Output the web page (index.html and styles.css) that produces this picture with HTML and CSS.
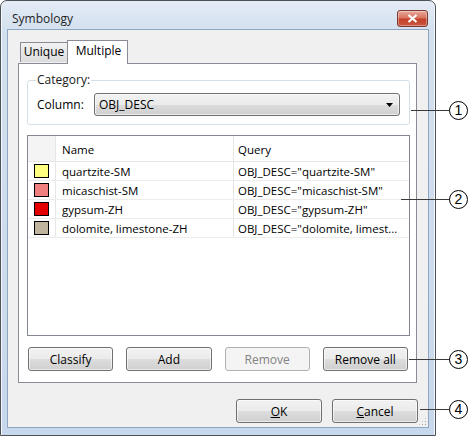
FILE: index.html
```html
<!DOCTYPE html>
<html>
<head>
<meta charset="utf-8">
<link rel="stylesheet" href="styles.css">
</head>
<body>
<div class="screen">
  <div class="window">
    <div class="titlebar">
      <span class="title">Symbology</span>
      <div class="close"><svg width="11" height="9" viewBox="0 0 11 9"><path d="M1.5 1 L9.5 8 M9.5 1 L1.5 8" stroke="#fff" stroke-width="2.2" fill="none"/></svg></div>
    </div>
    <div class="client">
      <div class="tabs">
        <div class="tab">Unique</div>
        <div class="tab active">Multiple</div>
      </div>
      <div class="pane">
        <fieldset class="group">
          <legend>Category:</legend>
          <div class="colrow">
            <span class="lbl">Column:</span>
            <div class="combo"><span>OBJ_DESC</span><svg width="7" height="4" viewBox="0 0 7 4"><path d="M0 0 H7 L3.5 4 Z" fill="#000"/></svg></div>
          </div>
        </fieldset>
        <div class="list">
          <div class="lrow head">
            <div class="c0"></div><div class="c1">Name</div><div class="c2">Query</div>
          </div>
          <div class="lrow">
            <div class="c0"><span class="sw sw-yellow"></span></div><div class="c1">quartzite-SM</div><div class="c2">OBJ_DESC="quartzite-SM"</div>
          </div>
          <div class="lrow">
            <div class="c0"><span class="sw sw-pink"></span></div><div class="c1">micaschist-SM</div><div class="c2">OBJ_DESC="micaschist-SM"</div>
          </div>
          <div class="lrow">
            <div class="c0"><span class="sw sw-red"></span></div><div class="c1">gypsum-ZH</div><div class="c2">OBJ_DESC="gypsum-ZH"</div>
          </div>
          <div class="lrow">
            <div class="c0"><span class="sw sw-tan"></span></div><div class="c1">dolomite, limestone-ZH</div><div class="c2">OBJ_DESC="dolomite, limest...</div>
          </div>
        </div>
        <div class="btnrow">
          <div class="btn">Classify</div>
          <div class="btn">Add</div>
          <div class="btn disabled">Remove</div>
          <div class="btn">Remove all</div>
        </div>
      </div>
      <div class="footer">
        <div class="btn"><u>O</u>K</div>
        <div class="btn"><u>C</u>ancel</div>
      </div>
      <div class="grip"></div>
    </div>
  </div>

  <div class="callout co1"><span class="line"></span><span class="num">1</span></div>
  <div class="callout co2"><span class="line"></span><span class="num">2</span></div>
  <div class="callout co3"><span class="line"></span><span class="num">3</span></div>
  <div class="callout co4"><span class="line"></span><span class="num">4</span></div>
</div>
</body>
</html>
```

FILE: styles.css
```css
* { box-sizing: border-box; }
html, body { margin: 0; padding: 0; background: #fff; }
body {
  font-family: "Open Sans", "Noto Sans", sans-serif;
  font-size: 11.5px;
  color: #000;
}
.screen {
  position: relative;
  width: 469px;
  height: 436px;
}
.window {
  width: 436px;
  height: 436px;
  border: 1px solid #4d5358;
  border-radius: 7px 7px 0 0;
  background: linear-gradient(to bottom, #e4ecf6 0px, #d3e0ef 30px, #c8d8ec 100%);
  padding: 0 6px 7px 6px;
  display: flex;
  flex-direction: column;
  box-shadow: inset 1px 0 0 #f4f8fc, inset -1px 0 0 #f4f8fc;
}
.titlebar {
  height: 28px;
  display: flex;
  align-items: flex-start;
  justify-content: space-between;
  padding-left: 5px;
}
.title {
  margin-top: 9px;
  font-size: 12px;
  color: #1e1e1e;
}
.close {
  margin-top: 9px;
  margin-right: 1px;
  width: 31px;
  height: 17px;
  border: 1px solid #7a3a32;
  border-radius: 3px;
  background: linear-gradient(to bottom, #e9a99c 0%, #d9755f 45%, #c4402a 55%, #c9573f 100%);
  display: flex;
  align-items: center;
  justify-content: center;
  box-shadow: inset 0 0 0 1px rgba(255,255,255,0.35);
}
.client {
  position: relative;
  flex: 1;
  background: #f0f0f0;
  border: 1px solid #8fa6c3;
  display: flex;
  flex-direction: column;
}
.tabs {
  display: flex;
  align-items: flex-end;
  height: 33px;
  padding-left: 12px;
  position: relative;
  z-index: 2;
}
.tab {
  width: 48px;
  height: 20px;
  border: 1px solid #898c95;
  border-bottom: none;
  background: linear-gradient(to bottom, #f2f2f2, #dcdcdc);
  margin-bottom: 1px;
  line-height: 18px;
  text-align: center;
  font-size: 12px;
}
.tab.active {
  width: 61px;
  height: 24px;
  background: #fff;
  margin-bottom: -1px;
  margin-left: -1px;
  padding-left: 2px;
  line-height: 20px;
}
.pane {
  margin: 0 11px 0 10px;
  height: 320px;
  border: 1px solid #898c95;
  background: #fff;
  padding: 0 8px 0 8px;
  display: flex;
  flex-direction: column;
}
.group {
  margin: 8px 0 0 0;
  padding: 0 9px 0 9px;
  border: 1px solid #d5dfe5;
  border-radius: 3px;
  height: 53px;
  flex-shrink: 0;
  box-shadow: inset 0 0 0 1px #fff;
}
.group legend {
  padding: 0 1px;
  margin-left: -1px;
  font-size: 12px;
  line-height: 16px;
  color: #1a1a1a;
}
.colrow {
  display: flex;
  align-items: center;
  margin-top: 5px;
}
.lbl {
  width: 57px;
  font-size: 12px;
}
.combo {
  width: 306px;
  height: 23px;
  border: 1px solid #707070;
  border-radius: 3px;
  background: linear-gradient(to bottom, #f2f2f2 0%, #ebebeb 50%, #dddddd 51%, #cfcfcf 100%);
  box-shadow: inset 0 0 0 1px rgba(255,255,255,0.6);
  display: flex;
  align-items: center;
  justify-content: space-between;
  padding: 0 6px 0 4px;
  font-size: 12px;
}
.list {
  margin-top: 10px;
  margin-right: -2px;
  height: 201px;
  border: 1px solid #828790;
  background: #fff;
  flex-shrink: 0;
}
.lrow {
  display: flex;
  height: 19px;
  border-bottom: 1px solid #ececec;
  align-items: stretch;
}
.lrow.head {
  height: 26px;
  border-bottom: 1px solid #e5e5e5;
}
.lrow > div {
  display: flex;
  align-items: center;
  border-right: 1px solid #e5e5e5;
  white-space: nowrap;
  overflow: hidden;
}
.c0 { width: 28px; justify-content: center; }
.c1 { width: 178px; padding-left: 6px; }
.c2 { flex: 1; padding-left: 4px; border-right: none !important; }
.head .c0 { background: #f4f4f4; }
.head > div { padding-top: 1px; }
.sw {
  width: 15px;
  height: 14px;
  border: 1px solid #000;
  display: block;
}
.sw-yellow { background: #ffff80; }
.sw-pink { background: #f08080; }
.sw-red { background: #e50000; }
.sw-tan { background: #c0b49c; }
.btnrow {
  display: flex;
  gap: 13px;
  margin-top: 11px;
  padding-left: 1px;
}
.btn {
  width: 86px;
  height: 24px;
  border: 1px solid #707070;
  border-radius: 3px;
  background: linear-gradient(to bottom, #f2f2f2 0%, #ebebeb 50%, #dddddd 51%, #cfcfcf 100%);
  box-shadow: inset 0 0 0 1px rgba(255,255,255,0.6);
  display: flex;
  align-items: center;
  justify-content: center;
  font-size: 12px;
}
.btn.disabled {
  border-color: #adb2b5;
  background: #f4f4f4;
  color: #838383;
  box-shadow: none;
}
.footer {
  display: flex;
  justify-content: flex-end;
  gap: 10px;
  padding-right: 10px;
  margin-top: 16px;
}
.grip {
  position: absolute;
  right: 1px;
  bottom: 1px;
  width: 9px;
  height: 9px;
  background:
    radial-gradient(circle, #a0a0a0 0.8px, transparent 1px) 0 0 / 3px 3px;
  clip-path: polygon(100% 0, 100% 100%, 0 100%);
}
.callout {
  position: absolute;
  display: flex;
  align-items: center;
  height: 20px;
}
.callout .line {
  flex: 1;
  height: 1px;
  background: #3a3a3a;
}
.callout .num {
  width: 19px;
  height: 19px;
  border: 1px solid #000;
  border-radius: 50%;
  display: flex;
  align-items: center;
  justify-content: center;
  font-family: "Liberation Sans", Arial, sans-serif;
  font-size: 14px;
  line-height: 1;
  background: #fff;
  margin-left: -1px;
}
.co1 { left: 411px; top: 100px; width: 57px; }
.co2 { left: 401px; top: 189px; width: 67px; }
.co3 { left: 409px; top: 349px; width: 59px; }
.co4 { left: 420px; top: 399px; width: 48px; }
```
